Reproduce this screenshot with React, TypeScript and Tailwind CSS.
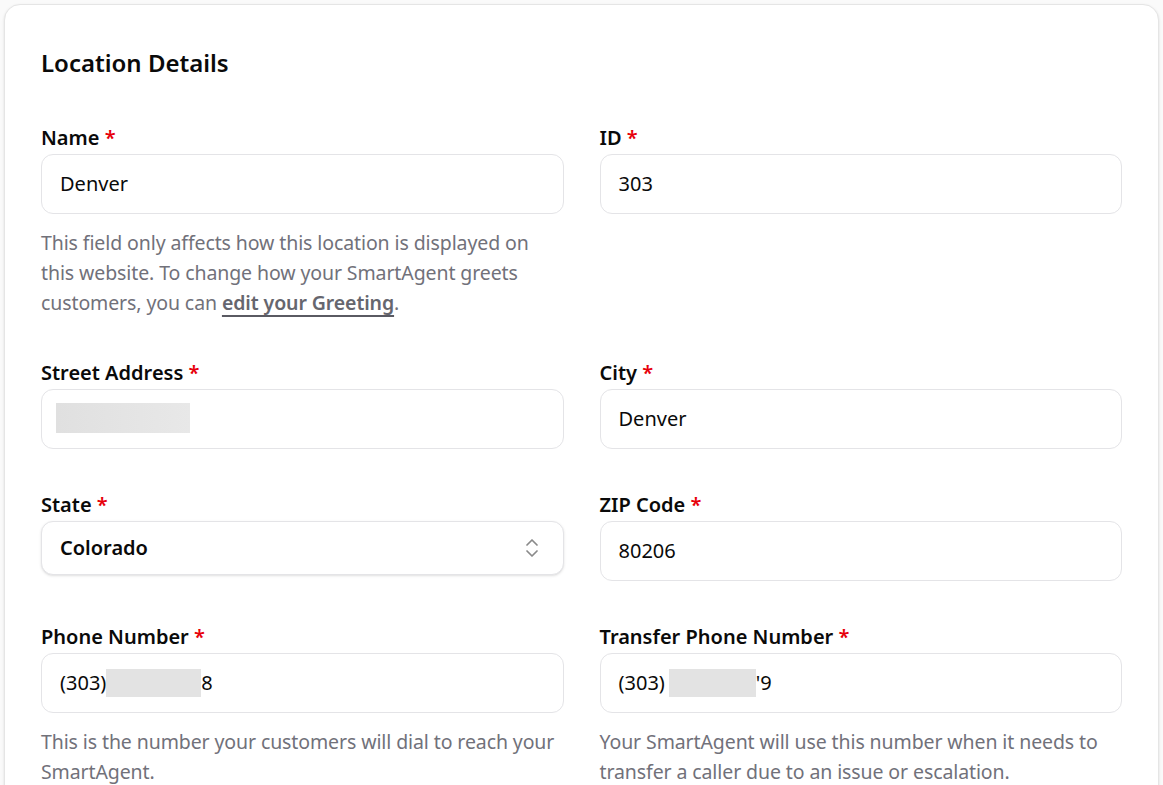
import React from 'react';
import { ChevronsUpDown } from 'lucide-react';

const Label: React.FC<{ children: React.ReactNode }> = ({ children }) => (
  <label className="block text-[20px] leading-6 font-semibold text-[#0a0a0a] mb-1 pt-px">
    {children} <span className="text-[#e7000b]">*</span>
  </label>
);

const Field: React.FC<{ children: React.ReactNode }> = ({ children }) => (
  <div className="flex items-center h-[60px] rounded-xl border border-[#e4e4e7] bg-white px-[18px] text-[20px] text-[#0a0a0a]">
    {children}
  </div>
);

const Help: React.FC<{ children: React.ReactNode }> = ({ children }) => (
  <p className="mt-3.5 text-[19.5px] leading-[30px] tracking-[-0.1px] text-[#71717a]">{children}</p>
);

const Redacted: React.FC<{ w: number }> = ({ w }) => (
  <span className="inline-block h-[28px] bg-[#e3e3e3]" style={{ width: w }} />
);

export default function App() {
  return (
    <div className="min-h-screen bg-[#fafafa] p-1 font-['Noto_Sans','Liberation_Sans',sans-serif]">
      <div className="rounded-2xl border border-[#e5e5e5] bg-white px-9 pt-10 pb-10 shadow-sm">
        <h2 className="text-2xl leading-9 font-semibold text-[#0a0a0a] mb-11">Location Details</h2>

        <div className="flex flex-col gap-[42px]">
          <div className="grid grid-cols-2 gap-x-9">
            <div>
              <Label>Name</Label>
              <Field>Denver</Field>
              <Help>
                This field only affects how this location is displayed on this website. To change how your SmartAgent greets customers, you can{' '}
                <a className="font-semibold underline decoration-2 underline-offset-[5px] text-[#66666e] decoration-[#5a5a62]">edit your Greeting</a>.
              </Help>
            </div>
            <div>
              <Label>ID</Label>
              <Field>303</Field>
            </div>
          </div>

          <div className="grid grid-cols-2 gap-x-9">
            <div>
              <Label>Street Address</Label>
              <Field>
                <span className="-ml-1 -mt-0.5 inline-block h-[30px] w-[134px] bg-gradient-to-r from-[#e0e0e0] to-[#e8e8e8]" />
              </Field>
            </div>
            <div>
              <Label>City</Label>
              <Field>Denver</Field>
            </div>
          </div>

          <div className="grid grid-cols-2 gap-x-9 mt-px">
            <div>
              <Label>State</Label>
              <div className="flex items-center justify-between h-[54px] rounded-xl border border-[#e4e4e7] bg-white pl-[18px] pr-[19px] text-[20px] font-semibold text-[#0a0a0a] shadow-sm">
                <span>Colorado</span>
                <ChevronsUpDown size={24} strokeWidth={1.75} className="text-[#8a8a8a]" />
              </div>
            </div>
            <div>
              <Label>ZIP Code</Label>
              <Field>80206</Field>
            </div>
          </div>

          <div className="grid grid-cols-2 gap-x-9 mt-px">
            <div>
              <Label>Phone Number</Label>
              <Field>
                <span>(303)</span>
                <Redacted w={95} />
                <span>8</span>
              </Field>
              <Help>This is the number your customers will dial to reach your SmartAgent.</Help>
            </div>
            <div>
              <Label>Transfer Phone Number</Label>
              <Field>
                <span>(303)</span>
                <span className="ml-1" />
                <Redacted w={87} />
                <span>'9</span>
              </Field>
              <Help>Your SmartAgent will use this number when it needs to transfer a caller due to an issue or escalation.</Help>
            </div>
          </div>
        </div>
      </div>
    </div>
  );
}
